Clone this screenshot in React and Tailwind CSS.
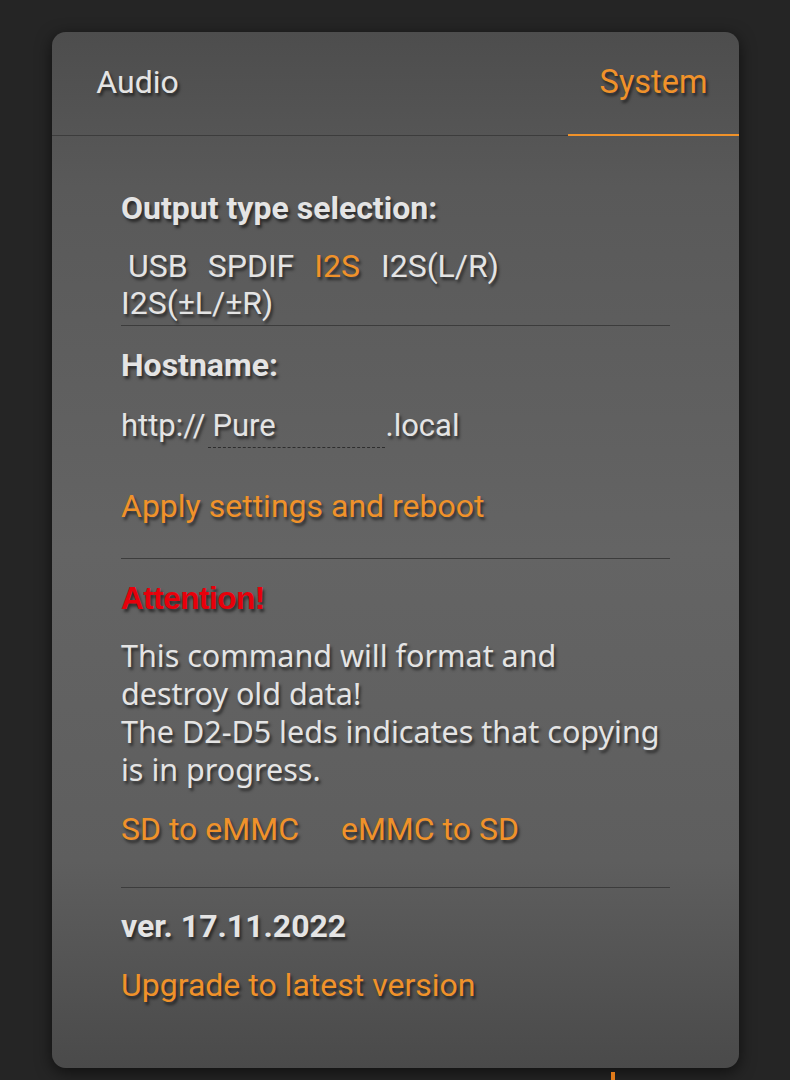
export default function App() {
  const shadow = "[text-shadow:2px_3px_3px_rgba(0,0,0,0.55)]";
  return (
    <div className="min-h-[1080px] w-[790px] bg-[#252525] pt-[32px] overflow-hidden" style={{ fontFamily: "Roboto, 'Liberation Sans', sans-serif" }}>
      <div className="ml-[52px] w-[687px] h-[1036px] rounded-[14px] bg-[linear-gradient(180deg,#4d4d4d_0%,#595959_15%,#646464_50%,#5e5e5e_80%,#4a4a4a_100%)] shadow-[0_4px_16px_rgba(0,0,0,0.6)] overflow-hidden">
        {/* Tabs */}
        <div className="flex justify-between h-[104px] border-b border-[#3c3c3c]">
          <div className={`w-[171px] flex justify-center pt-[31px] text-[32px] leading-[38px] text-[#e4e4e4] ${shadow}`}>Audio</div>
          <div className={`w-[171px] flex justify-center pt-[31px] text-[32.5px] leading-[38px] text-[#f0922a] border-b-2 border-[#f0922a] -mb-[1px] ${shadow}`}>System</div>
        </div>

        <div className="pl-[69px] pr-[69px]">
          {/* Output type */}
          <div className={`mt-[54px] text-[32px] leading-[36px] font-bold text-[#e4e4e4] ${shadow}`}>Output type selection:</div>
          <div className={`mt-[22px] text-[32px] leading-[37px] text-[#e4e4e4] border-b border-[#3c3c3c] pb-[3px] ${shadow}`}>
            <span className="inline-block ml-[7px] mr-[20px]">USB</span>
            <span className="inline-block mr-[20px]">SPDIF</span>
            <span className="inline-block mr-[21px] text-[#f0922a]">I2S</span>
            <span className="inline-block mr-[22px]">I2S(L/R)</span>
            <span className="inline-block">I2S(±L/±R)</span>
          </div>

          {/* Hostname */}
          <div className={`mt-[21px] text-[32px] leading-[36px] font-bold text-[#e4e4e4] ${shadow}`}>Hostname:</div>
          <div className={`mt-[25px] flex items-start text-[31px] leading-[36px] text-[#e4e4e4] ${shadow}`}>
            <span>http://</span>
            <span className="ml-[3px] w-[177px] h-[40px] border-b border-dashed border-[#2e2e2e] pl-[4px]">Pure</span>
            <span>.local</span>
          </div>
          <div className={`mt-[40px] text-[32px] leading-[36px] text-[#f0922a] ${shadow}`}>Apply settings and reboot</div>
          <div className="mt-[34px] border-b border-[#3c3c3c]"></div>

          {/* Attention */}
          <div className={`mt-[23px] text-[31.5px] leading-[32px] font-bold text-[#e8000b] tracking-[-0.5px] ${shadow}`} style={{ fontFamily: "'Liberation Sans', Arial, sans-serif" }}>Attention!</div>
          <div className={`mt-[22px] text-[30.5px] leading-[38px] text-[#e4e4e4] ${shadow}`} style={{ fontFamily: "'Noto Sans', 'Open Sans', sans-serif" }}>
            This command will format and<br />destroy old data!<br />The D2-D5 leds indicates that copying<br />is in progress.
          </div>
          <div className={`mt-[23px] text-[32px] leading-[36px] text-[#f0922a] ${shadow}`}>
            <span className="mr-[42px]">SD to eMMC</span>
            <span>eMMC to SD</span>
          </div>
          <div className="mt-[40px] border-b border-[#3c3c3c]"></div>

          {/* Version */}
          <div className={`mt-[20px] text-[32px] leading-[36px] font-bold text-[#e4e4e4] ${shadow}`}>ver. 17.11.2022</div>
          <div className={`mt-[23px] text-[32px] leading-[36px] text-[#f0922a] ${shadow}`}>Upgrade to latest version</div>
        </div>
      </div>
      <div className="ml-[611px] mt-[4px] w-[4px] h-[12px] bg-[#e07a1a]"></div>
    </div>
  );
}
